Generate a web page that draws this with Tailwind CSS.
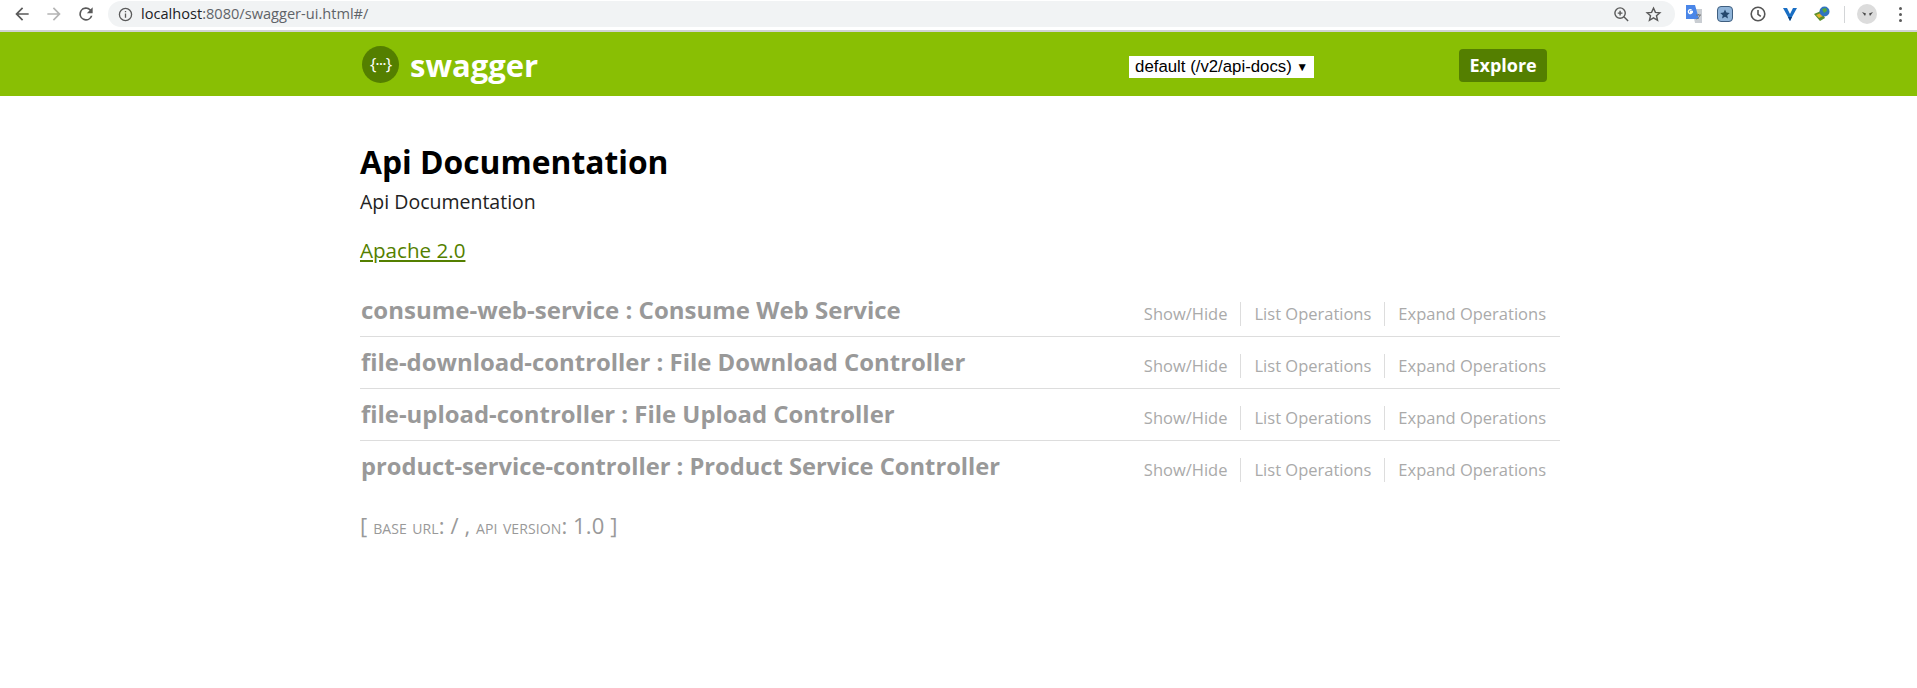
<!DOCTYPE html>
<html lang="en">
<head>
  <meta charset="UTF-8" />
  <title>Swagger UI</title>
  <script src="https://cdn.jsdelivr.net/npm/@tailwindcss/browser@4"></script>
</head>
<body class="h-[688px] overflow-hidden bg-white font-['Open_Sans',sans-serif]">
  <!-- Browser toolbar -->
  <div class="h-8 flex items-center bg-white border-b-2 border-[#d0d2d4] pl-[12px] pr-[14px] pb-[2px]">
    <div class="flex items-center gap-[12px] w-[96px]">
      <svg class="w-5 h-5" viewBox="0 0 24 24" fill="#5a5a5a"><path d="M20 11H7.8l5.6-5.6L12 4l-8 8 8 8 1.4-1.4L7.8 13H20z"/></svg>
      <svg class="w-5 h-5" viewBox="0 0 24 24" fill="#b4b4b4"><path d="M4 11h12.2l-5.6-5.6L12 4l8 8-8 8-1.4-1.4 5.6-5.6H4z"/></svg>
      <svg class="w-5 h-5" viewBox="0 0 24 24" fill="#5a5a5a"><path d="M17.65 6.35A8 8 0 1 0 19.73 14h-2.08A6 6 0 1 1 12 6c1.66 0 3.14.69 4.22 1.78L13 11h7V4z"/></svg>
    </div>
    <div class="flex-1 h-[26px] flex items-center bg-[#f1f3f4] rounded-full pl-[10px] pr-[13px]">
      <svg class="w-[15px] h-[15px] mr-[8px]" viewBox="0 0 16 16" fill="none" stroke="#5a5a5a" stroke-width="1.4"><circle cx="8" cy="8" r="6.5"/><path d="M8 7v4.5M8 4.2v1.5"/></svg>
      <span class="text-[14.6px] text-[#202124]">localhost<span class="text-[#5f6368]">:8080/swagger-ui.html#/</span></span>
      <div class="ml-auto flex items-center gap-[15px]">
        <svg class="w-[17px] h-[17px]" viewBox="0 0 18 18" fill="none" stroke="#5a5a5a" stroke-width="1.5"><circle cx="7.5" cy="7.5" r="5.5"/><path d="M11.5 11.5 16 16M5 7.5h5M7.5 5v5"/></svg>
        <svg class="w-[17px] h-[17px]" viewBox="0 0 24 24" fill="none" stroke="#5a5a5a" stroke-width="2"><path d="m12 3 2.7 6 6.3.6-4.8 4.2 1.5 6.4L12 16.8l-5.7 3.4 1.5-6.4L3 9.6 9.3 9z"/></svg>
      </div>
    </div>
    <div class="flex items-center ml-[10px]">
      <svg class="w-[18px] h-[18px] mr-[14px]" viewBox="0 0 18 18"><path fill="#c9cdd2" d="M7 4h10v14H10z"/><path fill="#4a86e8" d="M1 0h9l4 14H1z"/><path fill="none" stroke="#fff" stroke-width="1.3" d="M8 6.500H5.500v1.200H7A2 2 0 1 1 6.600 5"/><path fill="none" stroke="#777" d="M11 10h5M13.500 9v1M15 10c-.5 2-2 3.500-3.500 4"/></svg>
      <div class="w-4 h-4 flex items-center justify-center rounded-sm bg-[#8fb4d9] border border-[#3f5f80] mr-[17px]">
        <svg class="w-[10px] h-[10px]" viewBox="0 0 24 24" fill="#24476e"><path d="m12 1 3.400 7.500 8 .8-6 5.400 1.700 8L12 18.600 4.900 22.700l1.700-8-6-5.400 8-.8z"/></svg>
      </div>
      <svg class="w-4 h-4 mr-[16px]" viewBox="0 0 16 16" fill="none" stroke="#555" stroke-width="1.600"><circle cx="8" cy="8" r="6.800"/><path d="M8 4v4.400l2.800 2"/></svg>
      <svg class="w-4 h-4 mr-[15px]" viewBox="0 0 16 16"><path fill="#1a6fc4" d="M1 2h4l3 6 3-6h4l-5 9-2 4-2-4z"/><path fill="#0b3f7a" d="M6 11h4l-2 4z"/></svg>
      <svg class="w-[18px] h-[18px]" viewBox="0 0 18 18"><path fill="#5b8f2a" d="M1 9l7-3 4 7-5 3z"/><path fill="#e0b52e" d="M3 10l5-2 2 3-4 2z"/><circle cx="11.500" cy="6.500" r="5" fill="#2f74c0"/><path fill="#58a83a" d="M9 4l4-1 1 3-3 2z"/></svg>
      <div class="w-px h-[17px] bg-[#d3d5d7] ml-[13px] mr-[12px]"></div>
      <div class="w-5 h-5 rounded-full bg-[#dcdcdc] flex items-center justify-center">
        <svg class="w-[13px] h-[8px]" viewBox="0 0 13 8" fill="#4a4a4a"><path d="M1 2l4 1.500-1 2.500zM12 2 8 3.500l1 2.500z"/></svg>
      </div>
      <div class="flex flex-col gap-[3px] ml-[22px] mr-[1px]">
        <div class="w-[3px] h-[3px] rounded-full bg-[#5a5a5a]"></div>
        <div class="w-[3px] h-[3px] rounded-full bg-[#5a5a5a]"></div>
        <div class="w-[3px] h-[3px] rounded-full bg-[#5a5a5a]"></div>
      </div>
    </div>
  </div>

  <!-- Swagger header -->
  <header class="h-[64px] bg-[#89bf04]">
    <div class="w-[1200px] h-full ml-[360px] flex items-center">
      <div class="w-[37px] h-[37px] ml-[2px] rounded-full bg-[#547f00] flex items-center justify-center text-white text-[17px] tracking-[-1px]">{···}</div>
      <span class="ml-[11px] mt-[2px] text-[31px] font-bold text-white leading-none">swagger</span>
      <div class="ml-[591px] mt-[6px] w-[185px] h-[22px] bg-white flex items-center justify-between pl-[6px] pr-[6px] font-['Liberation_Sans',sans-serif] text-[16.8px] text-black">default (/v2/api-docs)<span class="text-[12px]">▼</span></div>
      <button class="ml-[145px] mt-[3px] w-[88px] h-[33px] bg-[#547f00] rounded-[4px] text-white text-[18px] font-bold">Explore</button>
    </div>
  </header>

  <!-- Api info -->
  <main class="w-[1200px] ml-[360px] pt-[45px]">
    <h1 class="text-[31.8px] leading-[42px] font-bold text-black">Api Documentation</h1>
    <p class="mt-[7px] text-[19.5px] leading-[24px] text-[#222]">Api Documentation</p>
    <p class="mt-[23px] text-[20.6px] leading-[26px]"><a href="#" class="text-[#547f00] underline">Apache 2.0</a></p>

    <!-- Resource list -->
    <ul class="mt-[22px]">
      <li class="h-[52px] flex justify-between border-b border-[#ddd] pl-[1px] pr-[14px]">
        <h2 class="text-[24px] leading-[32px] pt-[9px] font-bold text-[#999]">consume-web-service : Consume Web Service</h2>
        <div class="flex items-center h-[22px] mt-[18px] text-[16.5px] text-[#aaa]"><span class="pr-[13px]">Show/Hide</span><span class="px-[13px] border-x border-[#ddd]">List Operations</span><span class="pl-[13px]">Expand Operations</span></div>
      </li>
      <li class="h-[52px] flex justify-between border-b border-[#ddd] pl-[1px] pr-[14px]">
        <h2 class="text-[23.9px] leading-[32px] pt-[9px] font-bold text-[#999]">file-download-controller : File Download Controller</h2>
        <div class="flex items-center h-[22px] mt-[18px] text-[16.5px] text-[#aaa]"><span class="pr-[13px]">Show/Hide</span><span class="px-[13px] border-x border-[#ddd]">List Operations</span><span class="pl-[13px]">Expand Operations</span></div>
      </li>
      <li class="h-[52px] flex justify-between border-b border-[#ddd] pl-[1px] pr-[14px]">
        <h2 class="text-[23.9px] leading-[32px] pt-[9px] font-bold text-[#999]">file-upload-controller : File Upload Controller</h2>
        <div class="flex items-center h-[22px] mt-[18px] text-[16.5px] text-[#aaa]"><span class="pr-[13px]">Show/Hide</span><span class="px-[13px] border-x border-[#ddd]">List Operations</span><span class="pl-[13px]">Expand Operations</span></div>
      </li>
      <li class="h-[52px] flex justify-between pl-[1px] pr-[14px]">
        <h2 class="text-[23.7px] leading-[32px] pt-[9px] font-bold text-[#999]">product-service-controller : Product Service Controller</h2>
        <div class="flex items-center h-[22px] mt-[18px] text-[16.5px] text-[#aaa]"><span class="pr-[13px]">Show/Hide</span><span class="px-[13px] border-x border-[#ddd]">List Operations</span><span class="pl-[13px]">Expand Operations</span></div>
      </li>
    </ul>

    <p class="mt-[16px] text-[#999] text-[22px] tracking-[0.1px]">[ <span class="text-[20.4px] [font-variant:small-caps]">base url</span>: / , <span class="text-[20.4px] [font-variant:small-caps]">api version</span>: 1.0 ]</p>
  </main>
</body>
</html>
